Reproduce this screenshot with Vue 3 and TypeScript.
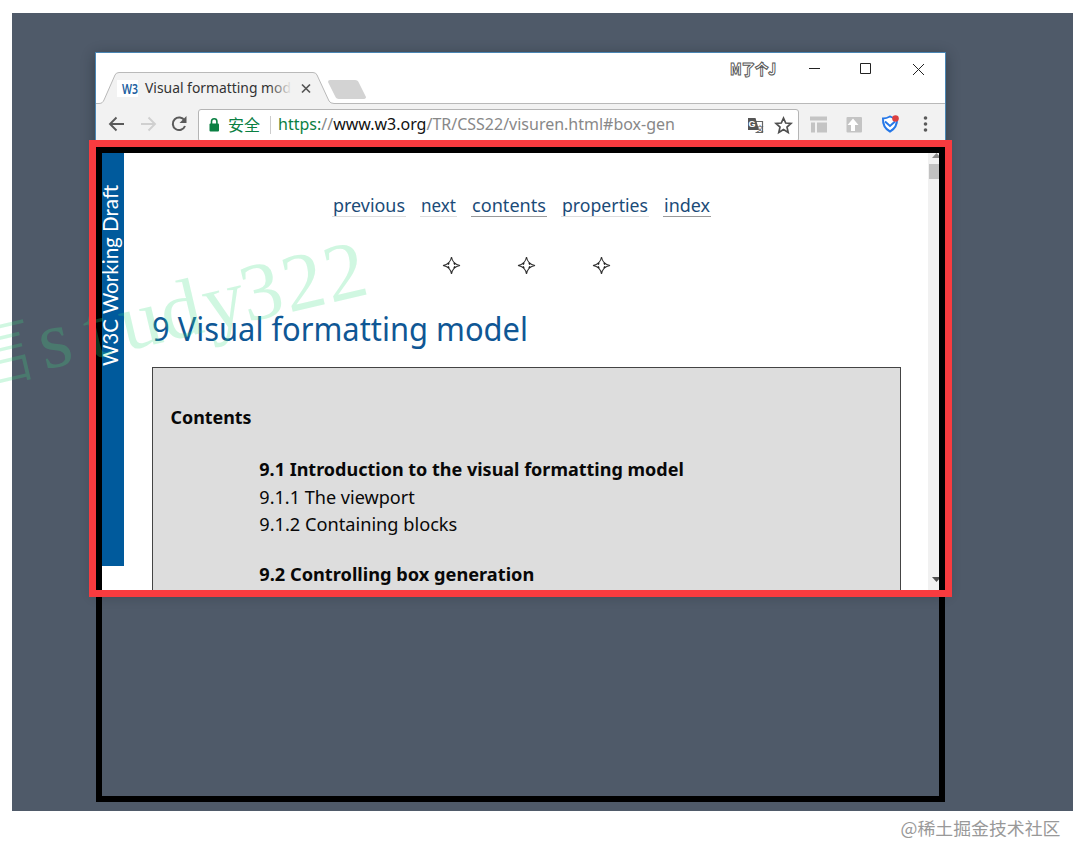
<script setup lang="ts">
interface NavLink { label: string; width: number; strong: boolean }
interface Row { label: string; bold: boolean; gap: boolean; len: number }

const links: NavLink[] = [
  { label: 'previous', width: 74, strong: false },
  { label: 'next', width: 37, strong: false },
  { label: 'contents', width: 76, strong: true },
  { label: 'properties', width: 88, strong: false },
  { label: 'index', width: 48, strong: true },
]
const rows: Row[] = [
  { label: '9.1 Introduction to the visual formatting model', bold: true, gap: false, len: 424.5 },
  { label: '9.1.1 The viewport', bold: false, gap: false, len: 155.5 },
  { label: '9.1.2 Containing blocks', bold: false, gap: false, len: 198 },
  { label: '9.2 Controlling box generation', bold: true, gap: true, len: 275 },
]
</script>

<template>
  <main class="sheet">
    <section class="desktop">
      <div class="window">
        <header class="titlebar">
          <svg class="chrome" width="849" height="51" viewBox="0 0 849 51">
            <path d="M0 51V50.5H3C6 50.5 7 49 8 47L19 22Q20 19.5 23 19.5H217Q220 19.5 221 22L233 48Q234.500 50.500 238 50.500H849V51Z" fill="#f2f2f2" />
            <path d="M0 50.500H3C6 50.500 7 49 8 47L19 22Q20 19.500 23 19.500H217Q220 19.500 221 22L233 48Q234.500 50.500 238 50.500H849" fill="none" stroke="#b9b9b9" />
            <path d="M234 27H259Q262 27 263 30L270 44Q270 46 267 46H243Q240 46 239 43L232 29Q232 27 234 27Z" fill="#d3d3d3" />
            <rect x="21" y="27" width="21" height="17" fill="#fff" />
            <text x="26" y="40.500" class="ui logo" textLength="16" lengthAdjust="spacingAndGlyphs">W3</text>
            <text x="49" y="39.500" class="ui tab" textLength="146" lengthAdjust="spacingAndGlyphs">Visual formatting mod</text>
            <defs>
              <linearGradient id="fade"><stop offset="0" stop-color="#f2f2f2" stop-opacity="0" /><stop offset="1" stop-color="#f2f2f2" /></linearGradient>
            </defs>
            <rect x="173" y="25" width="23" height="20" fill="url(#fade)" />
            <path d="M206 31.500l8 8m0-8l-8 8" stroke="#555" stroke-width="1.700" />
            <text x="634" y="22" class="nick" textLength="46" lengthAdjust="spacingAndGlyphs">M了个J</text>
            <path d="M713 15.500h11M764.500 10.500h10v10h-10zM817 11l11 11m0-11l-11 11" stroke="#222" fill="none" />
          </svg>
        </header>
        <div class="toolbar">
          <div class="buttons">
            <svg width="102" height="36" viewBox="0 0 102 36">
              <path d="M28 20H14.500M20.500 13.500L14 20l6.500 6.500" fill="none" stroke="#5a5a5a" stroke-width="1.900" />
              <path d="M45 20H58.500M52.500 13.500L59 20l-6.500 6.500" fill="none" stroke="#d0d0d0" stroke-width="1.900" />
              <path d="M88.500 16.500A6.300 6.300 0 1 0 89 22" fill="none" stroke="#5a5a5a" stroke-width="2" />
              <path d="M90.500 12v7h-7z" fill="#5a5a5a" />
            </svg>
          </div>
          <div class="omnibox">
            <svg width="598" height="31" viewBox="0 0 598 31">
              <rect x="10.500" y="13.500" width="9.500" height="8" rx="1" fill="#0b8043" />
              <path d="M12.500 14v-2.500a2.700 2.700 0 0 1 5.400 0V14" fill="none" stroke="#0b8043" stroke-width="1.600" />
              <text x="29" y="21" class="ui secure" textLength="32" lengthAdjust="spacingAndGlyphs">安全</text>
              <path d="M71.500 6v18" stroke="#ccc" />
              <text x="79" y="20" class="ui url" textLength="397" lengthAdjust="spacingAndGlyphs"><tspan fill="#0b8043">https:</tspan><tspan fill="#888">//</tspan><tspan fill="#111">www.w3.org</tspan><tspan fill="#888">/TR/CSS22/visuren.html#box-gen</tspan></text>
              <path d="M554.500 11.500h9v11h-7" fill="#fff" stroke="#666" stroke-width="1.200" />
              <path d="M549 8h7.500l3.500 12H549z" fill="#555" />
              <text x="549.500" y="17" class="g">G</text>
              <text x="557.500" y="20.500" class="wen">文</text>
              <path d="M584.500 8l2.200 5 5.300.5-4 3.600 1.200 5.300-4.700-2.800-4.700 2.800 1.200-5.300-4-3.600 5.300-.5z" fill="none" stroke="#505050" stroke-width="1.700" />
            </svg>
          </div>
          <svg class="extensions" width="145" height="36" viewBox="0 0 145 36">
            <path d="M11 12.500h17v4H11zM12 18.500h4v10h-4zM18 18.500h10v10H18z" fill="#c4c4c4" />
            <rect x="47.500" y="13" width="15.500" height="15.500" rx="1" fill="#c4c4c4" />
            <path d="M54 14.500l5.500 6.500h-3.500v6h-4v-6H48.500z" fill="#fff" />
            <path d="M84 14.500Q87.500 14.500 91 12.500Q94.500 14.500 98 14.500Q98.500 23.500 91 27.500Q83.500 23.500 84 14.500Z" fill="#fff" stroke="#2678e8" stroke-width="2" />
            <path d="M86 17.500l5 4.500 5-4.500" fill="none" stroke="#2678e8" stroke-width="2" />
            <circle cx="96.500" cy="14.500" r="3.300" fill="#dc4040" />
            <circle cx="126.500" cy="14" r="1.800" fill="#5a5a5a" /><circle cx="126.500" cy="20" r="1.800" fill="#5a5a5a" /><circle cx="126.500" cy="26" r="1.800" fill="#5a5a5a" />
          </svg>
        </div>
        <div class="viewport">
          <aside class="rail">
            <svg width="22" height="425" viewBox="0 0 22 425">
              <text transform="translate(15.500 219) rotate(-90)" class="draft" textLength="181" lengthAdjust="spacingAndGlyphs">W3C Working Draft</text>
            </svg>
          </aside>
          <article class="page">
            <nav class="links">
              <a v-for="l in links" :key="l.label" :class="{ strong: l.strong }">
                <svg :width="l.width" height="26"><text x="1" y="22" class="ui" :textLength="l.width - 2" lengthAdjust="spacingAndGlyphs">{{ l.label }}</text></svg>
              </a>
            </nav>
            <div class="stars">
              <svg v-for="n in 3" :key="n" width="20" height="20" viewBox="0 0 20 20">
                <path d="M10.500 1Q11.700 8.300 19 9.500Q11.700 10.700 10.500 18Q9.300 10.700 2 9.500Q9.300 8.300 10.500 1Z" fill="#fff" stroke="#333" stroke-width="1.100" />
                <path d="M8 7l-1 1.600M13 7l1 1.600M8 12l-1-1.600M13 12l1-1.600" stroke="#222" stroke-width="1.500" />
              </svg>
            </div>
            <h1><svg width="400" height="46"><text x="0" y="34" class="ui" textLength="376" lengthAdjust="spacingAndGlyphs">9 Visual formatting model</text></svg></h1>
            <section class="toc">
              <h2><svg width="100" height="28"><text x="-0.500" y="20" class="ui" textLength="81" lengthAdjust="spacingAndGlyphs">Contents</text></svg></h2>
              <ul>
                <li v-for="r in rows" :key="r.label" :class="{ bold: r.bold, gap: r.gap }">
                  <svg width="440" height="27.500"><text x="0.300" y="20" class="ui" :textLength="r.len" lengthAdjust="spacingAndGlyphs">{{ r.label }}</text></svg>
                </li>
              </ul>
            </section>
          </article>
          <div class="scroll">
            <svg width="17" height="443" viewBox="0 0 17 443">
              <path d="M4 11l4.500-5 4.500 5z" fill="#8a8a8a" />
              <rect x="1" y="17" width="15" height="15" fill="#c1c1c1" />
              <path d="M4 430h9l-4.500 5z" fill="#505050" />
            </svg>
          </div>
        </div>
      </div>
    </section>
    <div class="canvas-frame"></div>
    <svg class="mark" width="400" height="240" viewBox="0 0 400 240">
      <g transform="translate(40 171) rotate(-13.200)">
        <text x="-82" y="0" class="mark-cjk">信</text>
        <text x="5 52 88 130 174 213 256 299" y="0" class="mark-latin">study322</text>
      </g>
    </svg>
    <div class="view-frame"></div>
    <footer><svg width="172" height="32"><text x="8.500" y="23" textLength="160" lengthAdjust="spacingAndGlyphs">@稀土掘金技术社区</text></svg></footer>
  </main>
</template>

<style>
body { margin: 0; background: #fff; }
</style>

<style scoped>
.sheet { position: relative; box-sizing: border-box; width: 1084px; height: 862px; padding: 13px 11px 0 12px; overflow: hidden; background: #fff; font-family: "Noto Sans", "Noto Sans CJK SC", sans-serif; }
svg { display: block; overflow: visible; }
.ui { font-family: "Noto Sans", "Noto Sans CJK SC", sans-serif; }
.desktop { box-sizing: border-box; width: 1061px; height: 798px; padding: 39px 0 0 83px; background: #4f5a69; }
.window { box-sizing: border-box; width: 851px; height: 539px; border: 1px solid #4a86b4; background: #fff; box-shadow: 0 3px 12px rgba(20, 28, 38, .45); overflow: hidden; }
.titlebar { height: 51px; }
.logo { font-size: 14px; font-weight: 600; fill: #1c5f9f; }
.tab { font-size: 14px; fill: #333; }
.nick { font: 900 15px "Noto Sans CJK SC", sans-serif; fill: #fff; stroke: #555; stroke-width: 1px; }
.toolbar { display: flex; height: 43px; background: #f2f2f2; }
.omnibox { box-sizing: border-box; width: 601px; height: 33px; margin-top: 5px; border: 1px solid #b5b5b5; border-radius: 3px; background: #fff; }
.secure { font-size: 16px; fill: #0b8043; }
.url { font-size: 16.500px; }
.g { font: 700 9px "Liberation Sans", sans-serif; fill: #fff; }
.wen { font: 7px "Noto Sans CJK SC", sans-serif; fill: #555; }
.viewport { display: flex; height: 443px; }
.rail { width: 22px; height: 419px; margin-left: 6px; background: #005a9c; }
.draft { font: 20.500px Lato, sans-serif; fill: #fff; }
.page { width: 777px; height: 443px; margin-left: 28px; overflow: hidden; }
.links { display: flex; gap: 14px; margin: 43px 0 0 180px; }
.links a { height: 26px; border-bottom: 1px solid #ddd; font-size: 18.500px; fill: #1b4b78; }
.links a.strong { border-color: #999; }
.stars { display: flex; gap: 55px; margin: 39px 0 0 289px; }
h1 { height: 46px; margin: 31px 0 0; font-size: 32.500px; font-weight: 400; fill: #0f5795; }
.toc { box-sizing: border-box; width: 749px; height: 300px; margin-top: 14px; padding: 36px 0 0 18px; border: 1px solid #444; background: #ddd; fill: #080808; }
h2 { height: 28px; margin: 0; font-size: 18px; font-weight: 700; }
ul { margin: 24px 0 0 88px; padding: 0; list-style: none; font-size: 18px; }
li { height: 27.500px; }
.bold { font-weight: 700; }
.gap { margin-top: 22px; }
.scroll { width: 17px; background: #f1f1f1; }
.canvas-frame { position: absolute; box-sizing: border-box; left: 96px; top: 147px; width: 849px; height: 655px; border: 6px solid #000; }
.view-frame { position: absolute; box-sizing: border-box; left: 89px; top: 140px; width: 863px; height: 457px; border: 7px solid #f83b3f; }
.mark { position: absolute; left: 0; top: 200px; fill: rgba(60, 220, 130, .24); }
.mark-cjk { font: 300 82px "Noto Sans CJK SC", sans-serif; }
.mark-latin { font: 82px "Liberation Serif", serif; }
footer { display: flex; justify-content: flex-end; margin: 0 9px 0 0; padding-top: 1px; font: 17.500px "Noto Sans CJK SC", sans-serif; fill: #999; }
</style>
